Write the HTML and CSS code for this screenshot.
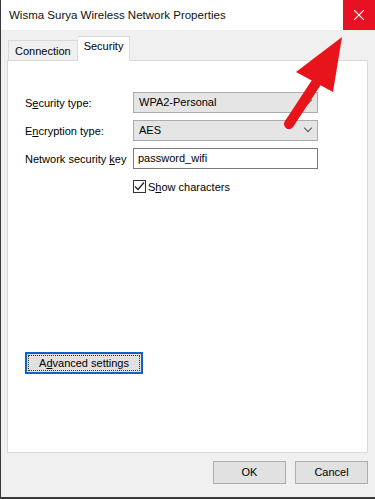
FILE: index.html
```html
<!DOCTYPE html>
<html lang="en">
<head>
    <meta charset="UTF-8">
    <meta name="viewport" content="width=device-width, initial-scale=1.0">
    <title>Wireless Network Properties</title>
    <link rel="stylesheet" href="styles.css">
</head>
<body>

    <div class="window">
        <div class="titlebar">
            <span class="title">Wisma Surya Wireless Network Properties</span>
            <button class="close">
                <svg width="10" height="10" viewBox="0 0 10 10"><path d="M0 0L10 10M10 0L0 10" stroke="#fff" stroke-width="1.1"/></svg>
            </button>
        </div>

        <div class="body">
            <div class="tabs">
                <div class="tab">Connection</div>
                <div class="tab active">Security</div>
            </div>

            <div class="panel">
                <div class="form">
                    <label class="label">S<u>e</u>curity type:</label>
                    <div class="select">WPA2-Personal<span class="chev"></span></div>

                    <label class="label">E<u>n</u>cryption type:</label>
                    <div class="select">AES<span class="chev"></span></div>

                    <label class="label">Network security <u>k</u>ey</label>
                    <div class="input">password_wifi</div>

                    <span></span>
                    <div class="check">
                        <span class="box">
                            <svg width="11" height="11" viewBox="0 0 11 11"><path d="M1 5.5L4 8.5L10 1.5" fill="none" stroke="#222" stroke-width="1.2"/></svg>
                        </span>
                        <span>S<u>h</u>ow characters</span>
                    </div>
                </div>

                <button class="button advanced">A<u>d</u>vanced settings</button>
            </div>

            <div class="footer">
                <button class="button">OK</button>
                <button class="button">Cancel</button>
            </div>
        </div>
    </div>

    <!-- red arrow pointing to the close button -->
    <svg class="arrow" width="80" height="100" viewBox="280 30 80 100">
        <path d="M342 37L296 72L333 92Z" fill="#e8141c"/>
        <path d="M318 80L289 124" stroke="#e8141c" stroke-width="10" stroke-linecap="round"/>
    </svg>

</body>
</html>
```

FILE: styles.css
```css
* {
    box-sizing: border-box;
}

body {
    margin: 0;
    width: 375px;
    height: 499px;
    overflow: hidden;
    font-family: "Liberation Sans", Arial, sans-serif;
    font-size: 11px;
    color: #000;
    background-color: #3a3a3a;
    position: relative;
}

.window {
    margin-left: 1px;
    height: 497px;
    background-color: #f0f0f0;
    display: flex;
    flex-direction: column;
}

.titlebar {
    height: 30px;
    background-color: #fff;
    display: flex;
    align-items: stretch;
}

.title {
    flex: 1;
    padding-left: 8px;
    font-size: 11.5px;
    line-height: 31px;
    color: #111;
}

.close {
    width: 32px;
    border: none;
    background-color: #e81123;
    display: flex;
    justify-content: center;
    align-items: center;
    padding: 0;
}

.body {
    flex: 1;
    padding: 6px 7px 8px 6px;
    display: flex;
    flex-direction: column;
}

.tabs {
    display: flex;
    align-items: flex-end;
    height: 24px;
    padding-left: 1px;
    position: relative;
    z-index: 1;
}

.tab {
    height: 20px;
    padding: 0 6px;
    line-height: 21px;
    border: 1px solid #d9d9d9;
    border-bottom: none;
    background-color: #f0f0f0;
}

.tab.active {
    height: 25px;
    line-height: 19px;
    margin-bottom: -1px;
    background-color: #fff;
    border-left: none;
}

.panel {
    flex: 1;
    background-color: #fff;
    border: 1px solid #d9d9d9;
    padding: 31px 48px 0 17px;
    display: flex;
    flex-direction: column;
    align-items: flex-start;
}

.form {
    display: grid;
    grid-template-columns: 108px 185px;
    grid-auto-rows: 21px;
    row-gap: 7px;
    align-items: center;
}

.label {
    white-space: nowrap;
}

.select {
    height: 21px;
    background-color: #e5e5e5;
    border: 1px solid #acacac;
    padding-left: 5px;
    line-height: 19px;
    position: relative;
}

.chev {
    position: absolute;
    right: 6px;
    top: 4px;
    width: 6px;
    height: 6px;
    border-right: 1px solid #555;
    border-bottom: 1px solid #555;
    transform: rotate(45deg);
}

.input {
    height: 21px;
    border: 1px solid #7a7a7a;
    padding-left: 4px;
    line-height: 19px;
}

.check {
    display: flex;
    align-items: center;
    gap: 2px;
}

.box {
    width: 13px;
    height: 13px;
    border: 1px solid #333;
    display: flex;
    justify-content: center;
    align-items: center;
}

.button {
    font-family: inherit;
    font-size: 11px;
    height: 23px;
    width: 73px;
    background-color: #e1e1e1;
    border: 1px solid #adadad;
    padding: 0;
    color: #000;
}

.advanced {
    margin-top: 155px;
    width: 118px;
    height: 22px;
    border: 2px solid #0f63c6;
    outline: 1px dotted #333;
    outline-offset: -4px;
}

.footer {
    height: 36px;
    display: flex;
    justify-content: flex-end;
    align-items: center;
    gap: 9px;
    padding-top: 2px;
}

.arrow {
    position: absolute;
    left: 280px;
    top: 30px;
}
```
